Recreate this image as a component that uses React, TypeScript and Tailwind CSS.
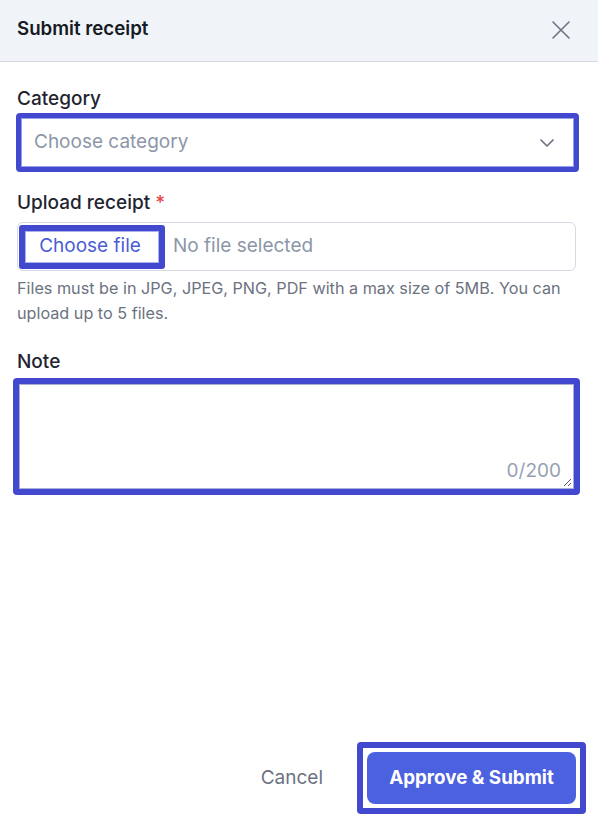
import React from "react";

export default function App() {
  return (
    <div
      className="w-[598px] h-[820px] bg-white flex flex-col text-[#1f2430]"
      style={{ fontFamily: "Inter, 'Noto Sans', sans-serif" }}
    >
      {/* Header */}
      <div className="h-[62px] shrink-0 flex items-center justify-between pl-[17px] pr-[27px] bg-[#f0f3f8] border-b border-[#d5d9e1]">
        <span className="text-[18.7px] font-semibold leading-6 text-[#151a23] -mt-[3px]">Submit receipt</span>
        <svg width="20" height="20" viewBox="0 0 20 20" className="-mt-[1px]" fill="none" stroke="#6b7280" strokeWidth="1.6" strokeLinecap="round">
          <path d="M2 2 L18 18 M18 2 L2 18" />
        </svg>
      </div>

      {/* Body */}
      <div className="flex flex-col pt-[25px] px-[17px]">
        <label className="text-[19px] font-medium leading-6 text-[#1f2430]">Category</label>
        <div className="mt-[2px] -ml-[1px] w-[563px] h-[59px] rounded-[4px] bg-[#4249cf] p-[5px]">
          <div className="w-full h-full bg-white border border-[#98a0ea] flex items-center justify-between pl-[12px] pr-[18px]">
            <span className="text-[19px] text-[#8c96a8] -mt-[1px]">Choose category</span>
            <svg width="16" height="10" viewBox="0 0 16 10" fill="none" stroke="#6b7280" strokeWidth="1.7" strokeLinecap="round" strokeLinejoin="round">
              <path d="M2 2 L8 8 L14 2" />
            </svg>
          </div>
        </div>

        <label className="mt-[19px] text-[19px] font-medium leading-6 text-[#1f2430]">
          Upload receipt <span className="text-[#e5484d]">*</span>
        </label>
        <div className="mt-[7px] w-[559px] h-[49px] rounded-[6px] border border-[#d6dae2] flex items-center pl-[1px]">
          <div className="w-[146px] h-[44px] rounded-[3px] bg-[#4249cf] p-[6px]">
            <div className="w-full h-full bg-white border border-[#aab1ee] flex items-center justify-center">
              <span className="text-[19px] text-[#4a5cd6] -ml-[4px] -mt-[1px]">Choose file</span>
            </div>
          </div>
          <span className="ml-[8px] text-[19px] text-[#8c96a8] -mt-[1px]">No file selected</span>
        </div>
        <p className="mt-[5px] text-[16.2px] leading-[25px] text-[#6b7280] pr-[6px]">
          Files must be in JPG, JPEG, PNG, PDF with a max size of 5MB. You can upload up to 5 files.
        </p>

        <label className="mt-[24px] text-[19px] font-medium leading-6 text-[#1f2430]">Note</label>
        <div className="mt-[4px] -ml-[4px] w-[567px] h-[117px] rounded-[4px] bg-[#4249cf] p-[6px]">
          <div className="relative w-full h-full bg-white border border-[#a9afd8]">
            <span className="absolute right-[12px] bottom-[3px] text-[19px] text-[#97a0b2]">0/200</span>
            <svg className="absolute right-[1px] bottom-[1px]" width="10" height="10" viewBox="0 0 10 10" stroke="#555" strokeWidth="1">
              <path d="M9 2 L2 9 M9 6 L6 9" />
            </svg>
          </div>
        </div>
      </div>

      {/* Footer */}
      <div className="mt-auto flex items-center justify-end pr-[12px] pb-[6px]">
        <span className="text-[19px] text-[#6b7280] mr-[34px]">Cancel</span>
        <div className="w-[229px] h-[72px] rounded-[4px] bg-[#4249cf] p-[6px]">
          <div className="w-full h-full bg-white p-[4px]">
            <div className="w-full h-full rounded-[8px] bg-[#4c61df] flex items-center justify-center">
              <span className="text-[18.8px] font-bold text-white">Approve &amp; Submit</span>
            </div>
          </div>
        </div>
      </div>
    </div>
  );
}
